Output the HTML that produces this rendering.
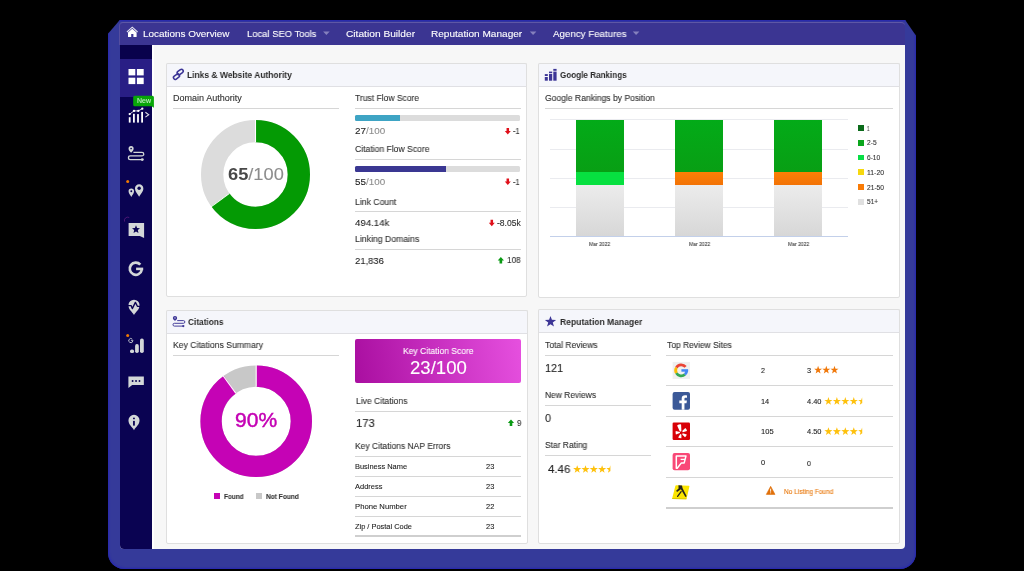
<!DOCTYPE html>
<html><head><meta charset="utf-8">
<style>
*{box-sizing:border-box;margin:0;padding:0}
html,body{width:1024px;height:571px;background:#000;overflow:hidden}
body{position:relative;font-family:"Liberation Sans",sans-serif;color:#2a2a2a}
.abs,.t,.hl,.panel,.ph,svg{position:absolute}
svg{overflow:visible}
#halo{left:108px;top:19.8px;width:808px;height:549.4px;background:#353a9a;box-shadow:inset 0 0 2px 1px #2626b4;border-radius:4px 4px 16px 16px;clip-path:polygon(12px 0,797px 0,100% 16px,100% 100%,0 100%,0 14px)}
#dash{left:120px;top:30px;width:785px;height:519px;background:#f7f7f7;border-radius:4px}
#nav{left:119.4px;top:21.6px;width:785.6px;height:23.4px;background:#3b3592;border-radius:4px 4px 0 0;border-top:1px solid #5f58a5;border-left:1px solid #554e9f}
#side{left:120px;top:45px;width:32.4px;height:504px;background:#0a0352;border-radius:0 0 0 4px}
#sideTop{left:120px;top:45px;width:32.4px;height:14px;background:#09024c}
#sideAct{left:120px;top:58.8px;width:32.4px;height:38px;background:#291e85}
.t{white-space:nowrap;line-height:1;transform-origin:0 50%;will-change:transform;-webkit-text-stroke:0.1px currentColor}
.panel{background:#fff;border:1px solid #dfdfdf;border-radius:2px}
.ph{height:24px;background:#f5f6fb;border:1px solid #dfdfdf;border-bottom:1px solid #e0e0e4;border-radius:2px 2px 0 0}
.hl{height:1px;background:#d6d6d6}
.g{color:#8c8c8c;font-weight:normal}
.bar{position:absolute;height:6px;border-radius:1px;background:#dcdcdc}
</style></head><body>
<div id="halo" class="abs"></div><div id="dash" class="abs"></div><div id="nav" class="abs"></div>
<div class="abs" style="left:152px;top:45px;width:2.3px;height:504px;background:#fff"></div>
<div id="side" class="abs"></div><div id="sideTop" class="abs"></div><div id="sideAct" class="abs"></div>
<div class="panel" style="left:166px;top:63px;width:361px;height:233.7px"></div>
<div class="ph" style="left:166px;top:63px;width:361px"></div>
<div class="panel" style="left:538px;top:63px;width:361.7px;height:234.6px"></div>
<div class="ph" style="left:538px;top:63px;width:361.7px"></div>
<div class="panel" style="left:166.3px;top:309.8px;width:361.5px;height:234px"></div>
<div class="ph" style="left:166.3px;top:309.8px;width:361.5px"></div>
<div class="panel" style="left:538px;top:309.4px;width:361.7px;height:234.5px"></div>
<div class="ph" style="left:538px;top:309.4px;width:361.7px"></div>
<div class="hl" style="left:172.7px;top:108px;width:165.9px;height:1px;background:#d6d6d6"></div>
<div class="hl" style="left:354.6px;top:108px;width:166.3px;height:1px;background:#d6d6d6"></div>
<div class="hl" style="left:354.6px;top:158.9px;width:166.3px;height:1px;background:#d6d6d6"></div>
<div class="hl" style="left:354.6px;top:211.2px;width:166.3px;height:1px;background:#d6d6d6"></div>
<div class="hl" style="left:354.6px;top:248.8px;width:166.3px;height:1px;background:#d6d6d6"></div>
<div class="abs" style="left:354.8px;top:115px;width:165.6px;height:6.2px;background:#dcdcdc;border-radius:1.5px"></div>
<div class="abs" style="left:354.8px;top:115px;width:45px;height:6.2px;background:#3ea4c4;border-radius:1.5px 0 0 1.5px"></div>
<div class="abs" style="left:354.8px;top:165.9px;width:165.6px;height:6.1px;background:#dcdcdc;border-radius:1.5px"></div>
<div class="abs" style="left:354.8px;top:165.9px;width:91.1px;height:6.1px;background:#3a3792;border-radius:1.5px 0 0 1.5px"></div>
<svg style="left:0;top:0" width="1024" height="571"><g transform="rotate(-90 255.5 174.5)">
<circle cx="255.5" cy="174.5" r="43.35" fill="none" stroke="#dcdcdc" stroke-width="22.3"/>
<circle cx="255.5" cy="174.5" r="43.35" fill="none" stroke="#049a04" stroke-width="22.3" stroke-dasharray="177.044 272.376"/>
<line x1="287.7" y1="174.5" x2="310.5" y2="174.5" stroke="#fff" stroke-width="1.1"/>
<line x1="236.573" y1="148.45" x2="223.172" y2="130.004" stroke="#fff" stroke-width="1.1"/>
</g></svg>
<svg style="left:0;top:0" width="1024" height="571"><polygon fill="#e0101a" points="507.80,134.40 510.80,130.88 509.06,130.88 509.06,128.00 506.54,128.00 506.54,130.88 504.80,130.88"/></svg>
<svg style="left:0;top:0" width="1024" height="571"><polygon fill="#e0101a" points="507.80,185.00 510.80,181.48 509.06,181.48 509.06,178.60 506.54,178.60 506.54,181.48 504.80,181.48"/></svg>
<svg style="left:0;top:0" width="1024" height="571"><polygon fill="#e0101a" points="491.80,226.20 494.80,222.68 493.06,222.68 493.06,219.80 490.54,219.80 490.54,222.68 488.80,222.68"/></svg>
<svg style="left:0;top:0" width="1024" height="571"><polygon fill="#0a9a14" points="500.85,257.10 504.00,260.56 502.17,260.56 502.17,263.40 499.53,263.40 499.53,260.56 497.70,260.56"/></svg>
<svg style="left:0;top:0" width="1024" height="571"><polygon fill="#0a9a14" points="511.00,419.40 514.10,422.98 512.30,422.98 512.30,425.90 509.70,425.90 509.70,422.98 507.90,422.98"/></svg>
<div class="hl" style="left:544.9px;top:108px;width:348.5px;height:1px;background:#d6d6d6"></div>
<div class="hl" style="left:550px;top:119.2px;width:298.3px;height:1px;background:#eaebef"></div>
<div class="hl" style="left:550px;top:148.6px;width:298.3px;height:1px;background:#eaebef"></div>
<div class="hl" style="left:550px;top:177.8px;width:298.3px;height:1px;background:#eaebef"></div>
<div class="hl" style="left:550px;top:206.8px;width:298.3px;height:1px;background:#eaebef"></div>
<div class="abs" style="left:576px;top:119.7px;width:47.8px;height:52.2px;background:linear-gradient(#03ab18,#089f14);"></div>
<div class="abs" style="left:576px;top:171.9px;width:47.8px;height:13.2px;background:#07e040;"></div>
<div class="abs" style="left:576px;top:185.1px;width:47.8px;height:51.1px;background:linear-gradient(#ececec,#d7d7d7);"></div>
<div class="abs" style="left:675.2px;top:119.7px;width:47.8px;height:52.2px;background:linear-gradient(#03ab18,#089f14);"></div>
<div class="abs" style="left:675.2px;top:171.9px;width:47.8px;height:13.2px;background:linear-gradient(#fc8005,#f27206);"></div>
<div class="abs" style="left:675.2px;top:185.1px;width:47.8px;height:51.1px;background:linear-gradient(#ececec,#d7d7d7);"></div>
<div class="abs" style="left:774.3px;top:119.7px;width:47.7px;height:52.2px;background:linear-gradient(#03ab18,#089f14);"></div>
<div class="abs" style="left:774.3px;top:171.9px;width:47.7px;height:13.2px;background:linear-gradient(#fc8005,#f27206);"></div>
<div class="abs" style="left:774.3px;top:185.1px;width:47.7px;height:51.1px;background:linear-gradient(#ececec,#d7d7d7);"></div>
<div class="hl" style="left:550px;top:235.8px;width:298.3px;height:1px;background:#c3d0ea"></div>
<div class="abs" style="left:858.4px;top:125.2px;width:5.7px;height:5.8px;background:#0b6b1a;"></div>
<div class="abs" style="left:858.4px;top:139.92px;width:5.7px;height:5.8px;background:#0aa61c;"></div>
<div class="abs" style="left:858.4px;top:154.64px;width:5.7px;height:5.8px;background:#07de45;"></div>
<div class="abs" style="left:858.4px;top:169.36px;width:5.7px;height:5.8px;background:#f6d80f;"></div>
<div class="abs" style="left:858.4px;top:184.08px;width:5.7px;height:5.8px;background:#f97b06;"></div>
<div class="abs" style="left:858.4px;top:198.8px;width:5.7px;height:5.8px;background:#e0e0e0;"></div>
<div class="hl" style="left:172.9px;top:355.1px;width:166.3px;height:1px;background:#d6d6d6"></div>
<svg style="left:0;top:0" width="1024" height="571"><g transform="rotate(-90 256.2 421.3)">
<circle cx="256.2" cy="421.3" r="45.15" fill="none" stroke="#c8c8c8" stroke-width="21.3"/>
<circle cx="256.2" cy="421.3" r="45.15" fill="none" stroke="#c503b5" stroke-width="21.3" stroke-dasharray="255.317 283.686"/>
<line x1="290.7" y1="421.3" x2="312.5" y2="421.3" stroke="#fff" stroke-width="1.1"/>
<line x1="284.111" y1="401.021" x2="301.748" y2="388.208" stroke="#fff" stroke-width="1.1"/>
</g></svg>
<div class="abs" style="left:214.2px;top:492.9px;width:6.1px;height:6.3px;background:#c503b5;"></div>
<div class="abs" style="left:255.7px;top:492.9px;width:6.1px;height:6.3px;background:#c8c8c8;"></div>
<div class="abs" style="left:355.1px;top:338.9px;width:166.1px;height:44.3px;background:linear-gradient(80deg,#a90ea0,#e650df);border-radius:2px"></div>
<div class="hl" style="left:355px;top:410.9px;width:166px;height:1px;background:#d6d6d6"></div>
<div class="hl" style="left:355px;top:455.5px;width:166px;height:1px;background:#d6d6d6"></div>
<div class="hl" style="left:355px;top:476px;width:166px;height:1px;background:#d6d6d6"></div>
<div class="hl" style="left:355px;top:495.8px;width:166px;height:1px;background:#d6d6d6"></div>
<div class="hl" style="left:355px;top:515.7px;width:166px;height:1px;background:#d6d6d6"></div>
<div class="hl" style="left:355px;top:535.4px;width:166px;height:1.6px;background:#cfcfcf"></div>
<div class="hl" style="left:545px;top:354.9px;width:105.5px;height:1px;background:#d6d6d6"></div>
<div class="hl" style="left:545px;top:404.8px;width:105.5px;height:1px;background:#d6d6d6"></div>
<div class="hl" style="left:545px;top:454.8px;width:105.5px;height:1px;background:#d6d6d6"></div>
<div class="hl" style="left:666.3px;top:355px;width:226.8px;height:1px;background:#d6d6d6"></div>
<div class="hl" style="left:666.3px;top:384.9px;width:226.8px;height:1px;background:#d6d6d6"></div>
<div class="hl" style="left:666.3px;top:415.6px;width:226.8px;height:1px;background:#d6d6d6"></div>
<div class="hl" style="left:666.3px;top:445.9px;width:226.8px;height:1px;background:#d6d6d6"></div>
<div class="hl" style="left:666.3px;top:476.6px;width:226.8px;height:1px;background:#d6d6d6"></div>
<div class="hl" style="left:666.3px;top:507px;width:226.8px;height:1.6px;background:#cfcfcf"></div>
<svg style="left:0;top:0" width="1024" height="571"><polygon fill="#fec10d" points="577.20,465.15 578.20,468.02 581.24,468.09 578.82,469.93 579.70,472.84 577.20,471.10 574.70,472.84 575.58,469.93 573.16,468.09 576.20,468.02"/><polygon fill="#fec10d" points="585.50,465.15 586.50,468.02 589.54,468.09 587.12,469.93 588.00,472.84 585.50,471.10 583.00,472.84 583.88,469.93 581.46,468.09 584.50,468.02"/><polygon fill="#fec10d" points="593.80,465.15 594.80,468.02 597.84,468.09 595.42,469.93 596.30,472.84 593.80,471.10 591.30,472.84 592.18,469.93 589.76,468.09 592.80,468.02"/><polygon fill="#fec10d" points="602.10,465.15 603.10,468.02 606.14,468.09 603.72,469.93 604.60,472.84 602.10,471.10 599.60,472.84 600.48,469.93 598.06,468.09 601.10,468.02"/><clipPath id="c6199"><rect x="606.25" y="463.1" width="4.15" height="12"/></clipPath><polygon clip-path="url(#c6199)" fill="#fec10d" points="610.40,465.15 611.40,468.02 614.44,468.09 612.02,469.93 612.90,472.84 610.40,471.10 607.90,472.84 608.78,469.93 606.36,468.09 609.40,468.02"/></svg>
<svg style="left:0;top:0" width="1024" height="571"><polygon fill="#f0780a" points="818.10,365.80 819.09,368.64 822.09,368.70 819.70,370.52 820.57,373.40 818.10,371.68 815.63,373.40 816.50,370.52 814.11,368.70 817.11,368.64"/><polygon fill="#f0780a" points="826.30,365.80 827.29,368.64 830.29,368.70 827.90,370.52 828.77,373.40 826.30,371.68 823.83,373.40 824.70,370.52 822.31,368.70 825.31,368.64"/><polygon fill="#f0780a" points="834.50,365.80 835.49,368.64 838.49,368.70 836.10,370.52 836.97,373.40 834.50,371.68 832.03,373.40 832.90,370.52 830.51,368.70 833.51,368.64"/></svg>
<svg style="left:0;top:0" width="1024" height="571"><polygon fill="#fec10d" points="828.43,397.05 829.42,399.92 832.47,399.99 830.04,401.83 830.92,404.74 828.43,403.00 825.93,404.74 826.81,401.83 824.38,399.99 827.43,399.92"/><polygon fill="#fec10d" points="836.88,397.05 837.87,399.92 840.92,399.99 838.49,401.83 839.37,404.74 836.88,403.00 834.38,404.74 835.26,401.83 832.83,399.99 835.88,399.92"/><polygon fill="#fec10d" points="845.33,397.05 846.32,399.92 849.37,399.99 846.94,401.83 847.82,404.74 845.33,403.00 842.83,404.74 843.71,401.83 841.28,399.99 844.33,399.92"/><polygon fill="#fec10d" points="853.78,397.05 854.77,399.92 857.82,399.99 855.39,401.83 856.27,404.74 853.78,403.00 851.28,404.74 852.16,401.83 849.73,399.99 852.78,399.92"/><clipPath id="c8643"><rect x="858" y="395" width="4.225" height="12"/></clipPath><polygon clip-path="url(#c8643)" fill="#fec10d" points="862.23,397.05 863.22,399.92 866.27,399.99 863.84,401.83 864.72,404.74 862.23,403.00 859.73,404.74 860.61,401.83 858.18,399.99 861.23,399.92"/></svg>
<svg style="left:0;top:0" width="1024" height="571"><polygon fill="#fec10d" points="828.43,427.25 829.42,430.12 832.47,430.19 830.04,432.03 830.92,434.94 828.43,433.20 825.93,434.94 826.81,432.03 824.38,430.19 827.43,430.12"/><polygon fill="#fec10d" points="836.88,427.25 837.87,430.12 840.92,430.19 838.49,432.03 839.37,434.94 836.88,433.20 834.38,434.94 835.26,432.03 832.83,430.19 835.88,430.12"/><polygon fill="#fec10d" points="845.33,427.25 846.32,430.12 849.37,430.19 846.94,432.03 847.82,434.94 845.33,433.20 842.83,434.94 843.71,432.03 841.28,430.19 844.33,430.12"/><polygon fill="#fec10d" points="853.78,427.25 854.77,430.12 857.82,430.19 855.39,432.03 856.27,434.94 853.78,433.20 851.28,434.94 852.16,432.03 849.73,430.19 852.78,430.12"/><clipPath id="c8673"><rect x="858" y="425.2" width="4.225" height="12"/></clipPath><polygon clip-path="url(#c8673)" fill="#fec10d" points="862.23,427.25 863.22,430.12 866.27,430.19 863.84,432.03 864.72,434.94 862.23,433.20 859.73,434.94 860.61,432.03 858.18,430.19 861.23,430.12"/></svg>
<svg style="left:0;top:0" width="1024" height="571"><polyline points="126.9,32 132.25,27.2 137.6,32" fill="none" stroke="#fff" stroke-opacity=".85" stroke-width="1.1" stroke-linejoin="miter"/>
<path d="M128 32.6 L132.25 28.8 L136.6 32.6 V37 H133.4 V34.1 H131.2 V37 H128Z" fill="#fff"/>
<polygon points="323.1,31.6 329.7,31.6 326.4,35" fill="#8580bd"/>
<polygon points="529.8,31.6 536.4,31.6 533.1,35" fill="#8580bd"/>
<polygon points="632.8,31.6 639.4,31.6 636.1,35" fill="#8580bd"/>
<rect x="128.5" y="69" width="6.8" height="6.4" fill="#fff"/>
<rect x="136.9" y="69" width="6.8" height="6.4" fill="#fff"/>
<rect x="128.5" y="77.7" width="6.8" height="6.4" fill="#fff"/>
<rect x="136.9" y="77.7" width="6.8" height="6.4" fill="#fff"/>
<path d="M134.7 95.7 H152.4 a1.5 1.5 0 0 1 1.5 1.5 V107.8 L151.6 106.2 H134.7 a1.5 1.5 0 0 1 -1.5 -1.5 V97.2 a1.5 1.5 0 0 1 1.5 -1.5Z" fill="#08a608"/>
<rect x="128.8" y="117.2" width="1.8" height="5.4" fill="#fff"/>
<rect x="133" y="113.8" width="1.8" height="8.8" fill="#fff"/>
<rect x="137.1" y="114.1" width="1.8" height="8.5" fill="#fff"/>
<rect x="141.2" y="111.9" width="1.8" height="10.7" fill="#fff"/>
<polyline points="129.7,114.1 134,110.9 138.3,110.9 142.3,108.7" fill="none" stroke="#fff" stroke-width=".8"/>
<circle cx="129.7" cy="114.1" r="1.15" fill="#fff"/>
<circle cx="134" cy="110.9" r="1.15" fill="#fff"/>
<circle cx="138.3" cy="110.9" r="1.15" fill="#fff"/>
<circle cx="142.3" cy="108.7" r="1.15" fill="#fff"/>
<polyline points="145.4,112.3 148.7,114.7 145.4,117.1" fill="none" stroke="#dcdce6" stroke-width="1.1"/>
<path d="M131.1 152.8 C130.207 151.347 128.55 150.69 128.55 148.65 A2.55 2.55 0 1 1 133.65 148.65 C133.65 150.69 131.993 151.347 131.1 152.8Z" fill="#d3d7d8"/>
<circle cx="131.1" cy="148.5" r="0.85" fill="#0a0352"/>
<path d="M133.4 152.4 H142 a1.75 1.75 0 0 1 0 3.5 H130.3 a1.85 1.85 0 0 0 0 3.7 H142" fill="none" stroke="#d3d7d8" stroke-width="1.3"/>
<circle cx="142.3" cy="159.6" r="1.45" fill="#d3d7d8"/>
<circle cx="127.7" cy="181.55" r="1.5" fill="#f07a00"/>
<path d="M139.15 196.8 C137.68 193.86 134.95 191.76 134.95 188.4 A4.2 4.2 0 1 1 143.35 188.4 C143.35 191.76 140.62 193.86 139.15 196.8Z" fill="#d3d7d8"/>
<circle cx="139.15" cy="188.3" r="1.7" fill="#0a0352"/>
<path d="M131.3 197 C130.338 194.988 128.55 193.45 128.55 191.25 A2.75 2.75 0 1 1 134.05 191.25 C134.05 193.45 132.263 194.988 131.3 197Z" fill="#d3d7d8"/>
<circle cx="131.3" cy="191.2" r="0.95" fill="#0a0352"/>
<path d="M124.6 221.6 A3.3 3.3 0 0 1 129.2 217.5" fill="none" stroke="#a030a0" stroke-opacity=".6" stroke-width=".7"/>
<path d="M128.6 223.1 H144.1 V237.9 L139.8 236.1 H128.6Z" fill="#d3d7d8"/>
<polygon points="136.00,225.30 137.12,227.96 139.99,228.20 137.81,230.09 138.47,232.90 136.00,231.40 133.53,232.90 134.19,230.09 132.01,228.20 134.88,227.96" fill="#0a0352"/>
<path d="M140.30 264.65 A6.05 6.05 0 1 0 141.72 269.96" fill="none" stroke="#d3d7d8" stroke-width="2.7" />
<rect x="136.1" y="267.6" width="7.1" height="2.6" fill="#d3d7d8"/>
<path d="M134 315 C132.058 311.587 128.45 309.69 128.45 305.25 A5.55 5.55 0 1 1 139.55 305.25 C139.55 309.69 135.942 311.587 134 315Z" fill="#d3d7d8"/>
<polyline points="127.8,305.6 131.1,305.6 132.3,308.6 135.4,302.4 137.4,306.3 140.2,306.3" fill="none" stroke="#0a0352" stroke-width="1.35" stroke-linejoin="round"/>
<circle cx="127.7" cy="335.4" r="1.5" fill="#f07a00"/>
<path d="M132.37 339.28 A2.05 2.05 0 1 0 132.82 340.96" fill="none" stroke="#b8bcc8" stroke-width="1" />
<rect x="130.9" y="340.2" width="2.4" height="0.9" fill="#b8bcc8"/>
<rect x="130" y="349.6" width="4.1" height="3.5" rx="1.7" fill="#d3d7d8"/>
<rect x="135.1" y="344.1" width="3.7" height="9" rx="1.8" fill="#d3d7d8"/>
<rect x="140" y="338.6" width="3.8" height="14.5" rx="1.8" fill="#d3d7d8"/>
<path d="M128.4 376.6 H143.85 V385.1 H132.2 L128.4 388Z" fill="#d3d7d8"/>
<circle cx="132.6" cy="381" r=".95" fill="#0a0352"/>
<circle cx="136.05" cy="381" r=".95" fill="#0a0352"/>
<circle cx="139.5" cy="381" r=".95" fill="#0a0352"/>
<path d="M134 430.2 C132.058 426.752 128.45 424.79 128.45 420.35 A5.55 5.55 0 1 1 139.55 420.35 C139.55 424.79 135.942 426.752 134 430.2Z" fill="#d3d7d8"/>
<rect x="133.05" y="417.7" width="1.8" height="1.5" fill="#0a0352"/><rect x="133.05" y="420.9" width="1.8" height="4.7" fill="#0a0352"/>
<rect x="176.9" y="70.25" width="6.6" height="3.5" rx="1.75" fill="none" stroke="#3c3596" stroke-width="1.55" transform="rotate(-36 180.2 72)"/>
<rect x="173.2" y="74.95" width="6.6" height="3.5" rx="1.75" fill="none" stroke="#3c3596" stroke-width="1.55" transform="rotate(-36 176.5 76.7)"/>
<rect x="544.8" y="77" width="3" height="3.7" fill="#3c3596"/>
<rect x="544.8" y="74.1" width="3" height="1.9" fill="#3c3596"/>
<rect x="549" y="73.8" width="3.2" height="6.9" fill="#3c3596"/>
<rect x="549" y="71.6" width="3.2" height="1.4" fill="#3c3596"/>
<rect x="553.3" y="71.6" width="3.3" height="9.1" fill="#3c3596"/>
<rect x="553.3" y="68.9" width="3.3" height="1.9" fill="#3c3596"/>
<path d="M175 320.9 C174.248 319.902 172.85 319.77 172.85 318.05 A2.15 2.15 0 1 1 177.15 318.05 C177.15 319.77 175.752 319.902 175 320.9Z" fill="#3c3596"/>
<circle cx="175" cy="317.9" r="0.6" fill="#f5f6fb"/>
<path d="M177.2 320.6 H183.5 a1.35 1.35 0 0 1 0 2.7 H174.4 a1.4 1.4 0 0 0 0 2.8 H183" fill="none" stroke="#3c3596" stroke-width=".95"/>
<circle cx="183.3" cy="326.1" r="1.15" fill="#3c3596"/>
<polygon points="550.50,315.90 551.91,319.86 556.11,319.98 552.78,322.54 553.97,326.57 550.50,324.20 547.03,326.57 548.22,322.54 544.89,319.98 549.09,319.86" fill="#3c3596"/>
<rect x="672.6" y="361.9" width="17.4" height="17" fill="#efefef"/>
<path d="M685.57 366.98 A5.55 5.55 0 0 0 676.39 367.62" fill="none" stroke="#ea4335" stroke-width="2.8" />
<path d="M676.39 367.62 A5.55 5.55 0 0 0 676.39 373.17" fill="none" stroke="#fbbc05" stroke-width="2.8" />
<path d="M676.39 373.17 A5.55 5.55 0 0 0 684.91 374.52" fill="none" stroke="#34a853" stroke-width="2.8" />
<path d="M684.91 374.52 A5.55 5.55 0 0 0 686.75 370.21" fill="none" stroke="#4285f4" stroke-width="2.8" />
<rect x="681.4" y="369.2" width="6.7" height="2.5" fill="#4285f4"/>
<rect x="672.6" y="392.1" width="17.4" height="17.6" rx="2" fill="#3b5998"/>
<path d="M681.7 409.7 V403.3 H679.3 V400.6 H681.7 V398.6 C681.7 396.4 683 395.3 685 395.3 C685.9 395.3 686.7 395.4 687 395.45 V397.8 H685.7 C684.7 397.8 684.45 398.3 684.45 399 V400.6 H686.9 L686.5 403.3 H684.45 V409.7Z" fill="#fff"/>
<rect x="672.6" y="422.6" width="17.4" height="17.3" rx="1.2" fill="#d80007"/>
<path d="M677.1 425.5 Q679 424.2 681.1 424.4 L681.4 430.9 Q680.6 432.1 679.7 431.2Z M682.2 431 L685.3 428.1 Q686.7 429.3 687 431 L682.8 432.3Z M682.7 433.3 L686.8 434.6 Q686.4 436.4 685 437.3 L682.2 434.4Z M681.4 434.4 L681.4 438.3 Q679.6 438.4 678.1 437.5 L680.3 434.1Z M679.9 433.1 L675.9 434.4 Q675.4 432.8 675.7 431.1 L679.9 432.1Z" fill="#fff"/>
<rect x="672.6" y="453" width="17.4" height="17.3" rx="2" fill="#f94877"/>
<path d="M676.3 455.9 H686 L684.2 462.9 H681.4 L677.2 468.3 H676.3 Z" fill="none" stroke="#fff" stroke-width="1.5" stroke-linejoin="round"/>
<path d="M680.6 459.4 H685" stroke="#fff" stroke-width="1.3" fill="none"/>
<path d="M676.2 485.2 L689 485.7 Q689.6 485.8 689.4 486.4 L686.6 498.7 Q686.4 499.3 685.8 499.3 L672.6 498.9 Q672 498.8 672.2 498.2 L675.4 485.8 Q675.6 485.2 676.2 485.2Z" fill="#fbe500"/>
<path d="M672.4 498 L686.6 498.4 L686.4 499.3 L672.2 498.9Z" fill="#d9c200"/>
<path d="M678.4 485.3 L682 485.45 L682.6 488.2 L686.7 496.2 L685.4 497.1 L680.9 489.2 L677.1 491.9 L676.1 490.8 L678.6 488.6Z" fill="#26241c"/>
<path d="M681.1 491.6 L677.6 496.4" stroke="#26241c" stroke-width="1.3" stroke-linecap="round" fill="none"/>
<path d="M770.65 486.3 L775 494.4 H766.3Z" fill="#e0700a" stroke="#e0700a" stroke-width=".6" stroke-linejoin="round"/>
<rect x="770.2" y="488.7" width=".9" height="3" fill="#fff"/><rect x="770.2" y="492.4" width=".9" height=".9" fill="#fff"/></svg>
<div class="t" id="t0" style="left:143.4px;top:29.00px;font-size:9.8px;transform:scaleX(1.0117);color:#fff;">Locations Overview</div>
<div class="t" id="t1" style="left:246.6px;top:29.00px;font-size:9.8px;transform:scaleX(0.9606);color:#fff;">Local SEO Tools</div>
<div class="t" id="t2" style="left:345.9px;top:29.00px;font-size:9.8px;transform:scaleX(1.0401);color:#fff;">Citation Builder</div>
<div class="t" id="t3" style="left:431.3px;top:29.00px;font-size:9.8px;transform:scaleX(1.0272);color:#fff;">Reputation Manager</div>
<div class="t" id="t4" style="left:552.5px;top:29.00px;font-size:9.8px;transform:scaleX(0.9924);color:#fff;">Agency Features</div>
<div class="t" id="t5" style="left:186.9px;top:70.00px;font-size:9.4px;transform:scaleX(0.9021);font-weight:bold;color:#2a2a2a;-webkit-text-stroke:0;">Links &amp; Website Authority</div>
<div class="t" id="t6" style="left:559.5px;top:70.00px;font-size:9.4px;transform:scaleX(0.8639);font-weight:bold;color:#2a2a2a;-webkit-text-stroke:0;">Google Rankings</div>
<div class="t" id="t7" style="left:187.7px;top:317.00px;font-size:9.4px;transform:scaleX(0.8826);font-weight:bold;color:#2a2a2a;-webkit-text-stroke:0;">Citations</div>
<div class="t" id="t8" style="left:559.7px;top:317.00px;font-size:9.4px;transform:scaleX(0.9132);font-weight:bold;color:#2a2a2a;-webkit-text-stroke:0;">Reputation Manager</div>
<div class="t" id="t9" style="left:172.8px;top:94.00px;font-size:8.8px;transform:scaleX(1.0269);color:#2e2e2e;">Domain Authority</div>
<div class="t" id="t10" style="left:354.8px;top:94.00px;font-size:8.8px;transform:scaleX(0.9689);color:#2e2e2e;">Trust Flow Score</div>
<div class="t" id="t11" style="left:354.8px;top:145.00px;font-size:8.8px;transform:scaleX(0.9766);color:#2e2e2e;">Citation Flow Score</div>
<div class="t" id="t12" style="left:354.8px;top:198.00px;font-size:8.8px;transform:scaleX(0.9842);color:#2e2e2e;">Link Count</div>
<div class="t" id="t13" style="left:354.8px;top:235.00px;font-size:8.8px;transform:scaleX(0.9885);color:#2e2e2e;">Linking Domains</div>
<div class="t" id="t14" style="left:354.8px;top:126.00px;font-size:9.8px;transform:scaleX(1.0072);"><b style="font-weight:normal;color:#222">27</b><span class="g">/100</span></div>
<div class="t" id="t15" style="left:354.8px;top:177.00px;font-size:9.8px;transform:scaleX(1.0072);"><b style="font-weight:normal;color:#222">55</b><span class="g">/100</span></div>
<div class="t" id="t16" style="left:354.8px;top:218.00px;font-size:9.8px;transform:scaleX(0.9835);color:#222;">494.14k</div>
<div class="t" id="t17" style="left:354.8px;top:256.00px;font-size:9.8px;transform:scaleX(0.9643);color:#222;">21,836</div>
<div class="t" id="t18" style="left:513.2px;top:127.00px;font-size:8.4px;transform:scaleX(0.8855);color:#2e2e2e;">-1</div>
<div class="t" id="t19" style="left:513.2px;top:178.00px;font-size:8.4px;transform:scaleX(0.8855);color:#2e2e2e;">-1</div>
<div class="t" id="t20" style="left:497.1px;top:219.00px;font-size:8.4px;transform:scaleX(1.0223);color:#2e2e2e;">-8.05k</div>
<div class="t" id="t21" style="left:506.9px;top:256.00px;font-size:8.4px;transform:scaleX(0.9725);color:#2e2e2e;">108</div>
<div class="t" id="t22" style="left:227.6px;top:166.00px;font-size:16.5px;transform:scaleX(1.1053);"><b style="color:#484848;-webkit-text-stroke:0">65</b><span class="g">/100</span></div>
<div class="t" id="t23" style="left:545.2px;top:94.00px;font-size:8.8px;transform:scaleX(0.9720);color:#2e2e2e;">Google Rankings by Position</div>
<div class="t" id="t24" style="left:589.2px;top:242.00px;font-size:5.6px;transform:scaleX(0.8968);color:#444;">Mar 2022</div>
<div class="t" id="t25" style="left:688.6px;top:242.00px;font-size:5.6px;transform:scaleX(0.8968);color:#444;">Mar 2022</div>
<div class="t" id="t26" style="left:787.6px;top:242.00px;font-size:5.6px;transform:scaleX(0.8968);color:#444;">Mar 2022</div>
<div class="t" id="t27" style="left:866.7px;top:126.00px;font-size:6.6px;transform:scaleX(0.7081);color:#333;">1</div>
<div class="t" id="t28" style="left:866.7px;top:140.00px;font-size:6.6px;transform:scaleX(1.0072);color:#333;">2-5</div>
<div class="t" id="t29" style="left:866.7px;top:155.00px;font-size:6.6px;transform:scaleX(0.9998);color:#333;">6-10</div>
<div class="t" id="t30" style="left:866.7px;top:170.00px;font-size:6.6px;transform:scaleX(1.0382);color:#333;">11-20</div>
<div class="t" id="t31" style="left:866.7px;top:185.00px;font-size:6.6px;transform:scaleX(1.0074);color:#333;">21-50</div>
<div class="t" id="t32" style="left:866.7px;top:199.00px;font-size:6.6px;transform:scaleX(0.9832);color:#333;">51+</div>
<div class="t" id="t33" style="left:173.3px;top:341.00px;font-size:8.8px;transform:scaleX(0.9802);color:#2e2e2e;">Key Citations Summary</div>
<div class="t" id="t34" style="left:234.6px;top:409.00px;font-size:21px;transform:scaleX(1.0016);color:#c402b4;-webkit-text-stroke:0.45px #c402b4;">90%</div>
<div class="t" id="t35" style="left:224.1px;top:493.00px;font-size:7px;transform:scaleX(0.9210);font-weight:bold;color:#333;">Found</div>
<div class="t" id="t36" style="left:265.9px;top:493.00px;font-size:7px;transform:scaleX(0.9371);font-weight:bold;color:#333;">Not Found</div>
<div class="t" id="t37" style="left:402.8px;top:347.00px;font-size:9px;transform:scaleX(0.9471);color:#fff;">Key Citation Score</div>
<div class="t" id="t38" style="left:409.6px;top:359.00px;font-size:18.2px;transform:scaleX(1.0208);color:#fff;">23/100</div>
<div class="t" id="t39" style="left:355.5px;top:397.00px;font-size:8.8px;transform:scaleX(0.9733);color:#2e2e2e;">Live Citations</div>
<div class="t" id="t40" style="left:355.5px;top:418.00px;font-size:11.8px;transform:scaleX(0.9600);color:#222;">173</div>
<div class="t" id="t41" style="left:516.8px;top:419.00px;font-size:8.4px;transform:scaleX(0.9418);color:#2e2e2e;">9</div>
<div class="t" id="t42" style="left:355.3px;top:442.00px;font-size:8.8px;transform:scaleX(0.9676);color:#2e2e2e;">Key Citations NAP Errors</div>
<div class="t" id="t43" style="left:355.3px;top:463.00px;font-size:7.4px;transform:scaleX(1.0065);color:#222;">Business Name</div>
<div class="t" id="t44" style="left:355.3px;top:483.00px;font-size:7.4px;transform:scaleX(1.0101);color:#222;">Address</div>
<div class="t" id="t45" style="left:355.3px;top:503.00px;font-size:7.4px;transform:scaleX(1.0398);color:#222;">Phone Number</div>
<div class="t" id="t46" style="left:355.3px;top:523.00px;font-size:7.4px;transform:scaleX(1.0035);color:#222;">Zip / Postal Code</div>
<div class="t" id="t47" style="left:485.6px;top:463.00px;font-size:7.4px;transform:scaleX(1.0080);color:#222;">23</div>
<div class="t" id="t48" style="left:485.6px;top:483.00px;font-size:7.4px;transform:scaleX(1.0080);color:#222;">23</div>
<div class="t" id="t49" style="left:485.6px;top:503.00px;font-size:7.4px;transform:scaleX(1.0080);color:#222;">22</div>
<div class="t" id="t50" style="left:485.6px;top:523.00px;font-size:7.4px;transform:scaleX(1.0080);color:#222;">23</div>
<div class="t" id="t51" style="left:545.2px;top:341.00px;font-size:8.8px;transform:scaleX(0.9690);color:#2e2e2e;">Total Reviews</div>
<div class="t" id="t52" style="left:666.7px;top:341.00px;font-size:8.8px;transform:scaleX(0.9602);color:#2e2e2e;">Top Review Sites</div>
<div class="t" id="t53" style="left:545.4px;top:363.00px;font-size:11.8px;transform:scaleX(0.9244);color:#222;">121</div>
<div class="t" id="t54" style="left:545.2px;top:391.00px;font-size:8.8px;transform:scaleX(0.9569);color:#2e2e2e;">New Reviews</div>
<div class="t" id="t55" style="left:545.4px;top:413.00px;font-size:11.8px;transform:scaleX(0.9143);color:#222;">0</div>
<div class="t" id="t56" style="left:545.2px;top:441.00px;font-size:8.8px;transform:scaleX(0.9610);color:#2e2e2e;">Star Rating</div>
<div class="t" id="t57" style="left:547.6px;top:464.00px;font-size:11.8px;transform:scaleX(0.9709);color:#222;">4.46</div>
<div class="t" id="t58" style="left:760.7px;top:367.00px;font-size:7.4px;transform:scaleX(0.9455);color:#222;">2</div>
<div class="t" id="t59" style="left:760.7px;top:398.00px;font-size:7.4px;transform:scaleX(0.9958);color:#222;">14</div>
<div class="t" id="t60" style="left:760.7px;top:428.00px;font-size:7.4px;transform:scaleX(1.0208);color:#222;">105</div>
<div class="t" id="t61" style="left:760.7px;top:459.00px;font-size:7.4px;transform:scaleX(0.9939);color:#222;">0</div>
<div class="t" id="t62" style="left:807.0px;top:367.00px;font-size:7.4px;transform:scaleX(0.9939);color:#222;">3</div>
<div class="t" id="t63" style="left:807.0px;top:398.00px;font-size:7.4px;transform:scaleX(1.0076);color:#222;">4.40</div>
<div class="t" id="t64" style="left:807.0px;top:428.00px;font-size:7.4px;transform:scaleX(1.0076);color:#222;">4.50</div>
<div class="t" id="t65" style="left:807.0px;top:460.00px;font-size:7.4px;transform:scaleX(0.9212);color:#222;">0</div>
<div class="t" id="t66" style="left:784.0px;top:489.00px;font-size:6.6px;transform:scaleX(0.9868);color:#e8770a;">No Listing Found</div>
<div class="t" id="t67" style="left:136.8px;top:98.00px;font-size:6.8px;transform:scaleX(1.0287);color:#c4ecc4;">New</div>
</body></html>
